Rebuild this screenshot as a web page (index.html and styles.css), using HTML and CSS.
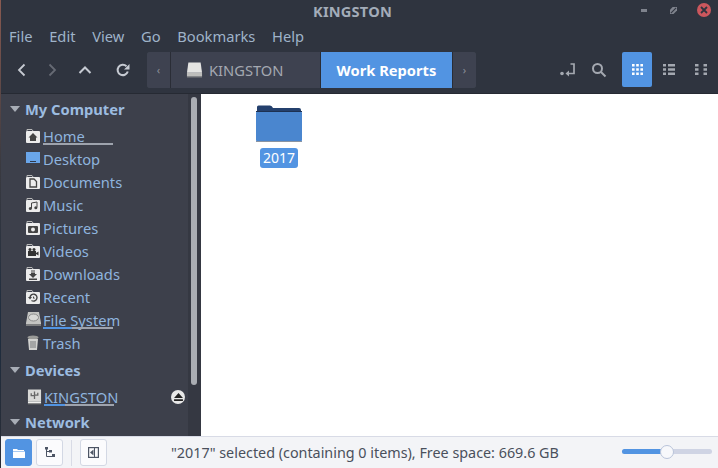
FILE: index.html
```html
<!DOCTYPE html>
<html lang="en">
<head>
<meta charset="utf-8">
<title>KINGSTON</title>
<link rel="stylesheet" href="styles.css">
</head>
<body>
<div class="window">
  <header class="titlebar">
    <span class="title">KINGSTON</span>
    <div class="wm">
      <span class="wm-min"></span>
      <svg class="wm-max" width="7" height="7" viewBox="0 0 8 8"><path d="M0 8V3L3 0L8 0V4L4 8Z" fill="#7f838d"/><path d="M1 7L7 1" stroke="#2f343f" stroke-width="1.2"/></svg>
      <span class="wm-close"><svg width="8" height="8" viewBox="0 0 8 8"><path d="M1 1L7 7M7 1L1 7" stroke="#2f343f" stroke-width="1.8"/></svg></span>
    </div>
  </header>
  <nav class="menubar">
    <span>File</span><span>Edit</span><span>View</span><span>Go</span><span>Bookmarks</span><span>Help</span>
  </nav>
  <div class="toolbar">
    <div class="navs">
      <svg class="ico" width="16" height="16" viewBox="0 0 16 16"><path d="M10.500 2.500L5 8l5.500 5.500" fill="none" stroke="#c6cad2" stroke-width="1.800"/></svg>
      <svg class="ico" width="16" height="16" viewBox="0 0 16 16"><path d="M5.500 2.500L11 8l-5.500 5.500" fill="none" stroke="#666a74" stroke-width="1.800"/></svg>
      <svg class="ico" width="16" height="16" viewBox="0 0 16 16"><path d="M2.500 11L8 5.500 13.500 11" fill="none" stroke="#c6cad2" stroke-width="2"/></svg>
      <svg class="ico" width="16" height="16" viewBox="0 0 16 16"><path d="M12.800 9.500A5.200 5.200 0 1 1 11.500 4.200" fill="none" stroke="#c6cad2" stroke-width="2"/><path d="M9 7.500h5.500V2z" fill="#c6cad2"/></svg>
    </div>
    <div class="path">
      <span class="arrow arrow-left">‹</span>
      <span class="crumb">
        <svg width="17" height="16" viewBox="0 0 18 16"><path d="M2.500 0h13l1.500 11H1z" fill="#e4e4e2"/><rect x="1" y="11" width="16" height="4" fill="#bdbdbb"/><rect x="1" y="15" width="16" height="1" fill="#77787c"/></svg>
        KINGSTON
      </span>
      <span class="crumb-active">Work Reports</span>
      <span class="arrow arrow-right">›</span>
    </div>
    <div class="tools">
      <svg class="tool-ico" width="16" height="16" viewBox="0 0 16 16"><circle cx="2" cy="11.500" r="1.800" fill="#a4a8b0"/><path d="M10.500 2h3.500v9.500H7" fill="none" stroke="#a4a8b0" stroke-width="1.700"/><path d="M9 8.500v6L5.500 11.500z" fill="#a4a8b0"/></svg>
      <svg class="tool-ico" width="16" height="16" viewBox="0 0 16 16"><circle cx="6.500" cy="6.500" r="4.500" fill="none" stroke="#a4a8b0" stroke-width="2"/><path d="M10 10l4.500 4.500" stroke="#a4a8b0" stroke-width="2"/></svg>
      <span class="view-on"><svg width="11" height="11" viewBox="0 0 11 11"><path d="M0 0h2.600v2.600H0zM4.200 0h2.600v2.600H4.200zM8.400 0h2.600v2.600H8.400zM0 4.200h2.600v2.600H0zM4.200 4.200h2.600v2.600H4.200zM8.400 4.200h2.600v2.600H8.400zM0 8.400h2.600v2.600H0zM4.200 8.400h2.600v2.600H4.200zM8.400 8.400h2.600v2.600H8.400z" fill="#fff"/></svg></span>
      <svg class="view-off" width="12" height="11" viewBox="0 0 12 11"><path d="M0 0h3v2.600H0zM5 0h7v2.600H5zM0 4.200h3v2.600H0zM5 4.200h7v2.600H5zM0 8.400h3v2.600H0zM5 8.400h7v2.600H5z" fill="#a4a8b0"/></svg>
      <svg class="view-off" width="12" height="11" viewBox="0 0 12 11"><path d="M0 0h3.500v2.600H0zM8.500 0H12v2.600H8.500zM0 4.200h3.500v2.600H0zM8.500 4.200H12v2.600H8.500zM0 8.400h3.500v2.600H0zM8.500 8.400H12v2.600H8.500z" fill="#a4a8b0"/></svg>
    </div>
  </div>
  <div class="main">
    <aside class="sidebar">
      <div class="places">
        <div class="head first"><span class="tri"></span>My Computer</div>
        <div class="row row-first"><svg class="pl" width="14" height="15" viewBox="0 0 14 15"><path d="M1 3V1.500h5L7 3" fill="none" stroke="#b8b8b8"/><rect y="3" width="14" height="12" rx="1" fill="#ececec"/><path d="M7 5L2.500 9.500H4V13h6V9.500h1.500z" fill="#444"/></svg><span class="lbl use">Home<i class="bar"></i></span></div>
        <div class="row"><svg class="pl" width="14" height="15" viewBox="0 0 14 15"><rect y="1" width="14" height="11" fill="#6aa6ea"/><rect x="4" y="10" width="6" height="1" fill="#2f3a4c"/></svg><span class="lbl">Desktop</span></div>
        <div class="row"><svg class="pl" width="14" height="15" viewBox="0 0 14 15"><path d="M1 3V1.500h5L7 3" fill="none" stroke="#b8b8b8"/><rect y="3" width="14" height="12" rx="1" fill="#ececec"/><path d="M4 5h4l2.500 2.500V13H4z" fill="none" stroke="#444" stroke-width="1.300"/></svg><span class="lbl">Documents</span></div>
        <div class="row"><svg class="pl" width="14" height="15" viewBox="0 0 14 15"><path d="M1 3V1.500h5L7 3" fill="none" stroke="#b8b8b8"/><rect y="3" width="14" height="12" rx="1" fill="#ececec"/><path d="M5.500 11.500V6L11 5v5.500" fill="none" stroke="#444"/><circle cx="4.300" cy="11.500" r="1.500" fill="#444"/><circle cx="9.800" cy="10.700" r="1.500" fill="#444"/></svg><span class="lbl">Music</span></div>
        <div class="row"><svg class="pl" width="14" height="15" viewBox="0 0 14 15"><path d="M1 3V1.500h5L7 3" fill="none" stroke="#b8b8b8"/><rect y="3" width="14" height="12" rx="1" fill="#ececec"/><rect x="2" y="6" width="10" height="7" rx="1" fill="#444"/><circle cx="7" cy="9.500" r="2" fill="#ececec"/></svg><span class="lbl">Pictures</span></div>
        <div class="row"><svg class="pl" width="14" height="15" viewBox="0 0 14 15"><path d="M1 3V1.500h5L7 3" fill="none" stroke="#b8b8b8"/><rect y="3" width="14" height="12" rx="1" fill="#ececec"/><rect x="2" y="8" width="8" height="5" fill="#333"/><circle cx="4" cy="6.500" r="1.500" fill="#333"/><circle cx="8" cy="6.500" r="1.500" fill="#333"/><path d="M10 10l2.500-1.500v4L10 11z" fill="#333"/></svg><span class="lbl">Videos</span></div>
        <div class="row"><svg class="pl" width="14" height="15" viewBox="0 0 14 15"><path d="M1 3V1.500h5L7 3" fill="none" stroke="#b8b8b8"/><rect y="3" width="14" height="12" rx="1" fill="#ececec"/><path d="M5 4.500h4v1H5zM5 6.500h4V8h2l-4 4-4-4h2zM3 12.500h8V14H3z" fill="#444"/></svg><span class="lbl">Downloads</span></div>
        <div class="row"><svg class="pl" width="14" height="15" viewBox="0 0 14 15"><path d="M1 3V1.500h5L7 3" fill="none" stroke="#b8b8b8"/><rect y="3" width="14" height="12" rx="1" fill="#ececec"/><path d="M4 8.500a3.500 3.500 0 1 1 1.500 3" fill="none" stroke="#444" stroke-width="1.400"/><path d="M2 8h4l-2 2.500zM7 7v2.500h2" fill="#444"/></svg><span class="lbl">Recent</span></div>
        <div class="row"><svg class="pl wide" width="15" height="15" viewBox="0 0 15 15"><path d="M2 0h11l2 11v3H0v-3z" fill="#c4c4c2"/><ellipse cx="7.500" cy="5.500" rx="5" ry="3.500" fill="#d8d8d6" stroke="#8b8b8b"/><rect y="12" width="15" height="2" fill="#7c7d7f"/></svg><span class="lbl use">File System<i class="bar bar-fs"></i></span></div>
        <div class="row"><svg class="pl" width="14" height="16" viewBox="0 0 14 16"><ellipse cx="7" cy="2.500" rx="5.500" ry="2" fill="#9a9a98"/><path d="M2 4h10l-1 11H3z" fill="#d2d2d0"/><path d="M5 6v7M7 6v7M9 6v7" stroke="#77787a"/></svg><span class="lbl">Trash</span></div>
        <div class="head devices"><span class="tri"></span>Devices</div>
        <div class="row row-dev"><svg class="pl wide" width="15" height="16" viewBox="0 0 16 16"><path d="M1 0h14v13H1z" fill="#d9d9d7"/><path d="M8 2v8M4.500 4v2.500H8M11.500 3.500V6H8" stroke="#666" stroke-width="1.400" fill="none"/><rect x="1" y="13" width="14" height="2" fill="#f0f0ee"/><rect x="1" y="15" width="14" height="1" fill="#666"/></svg><span class="lbl use">KINGSTON<i class="bar bar-dev"></i></span>
          <span class="eject"><svg width="9" height="8" viewBox="0 0 10 9"><path d="M5 0l5 5.500H0zM0 7h10v2H0z" fill="#222"/></svg></span></div>
        <div class="head network"><span class="tri"></span>Network</div>
      </div>
      <div class="scroll"><span class="thumb"></span></div>
    </aside>
    <section class="files">
      <div class="item">
        <svg width="48" height="38" viewBox="0 0 48 38"><path d="M2 4V3a1.500 1.500 0 0 1 1.500-1.500H15q2 0 3 2.500h26a2 2 0 0 1 2 2v3H2z" fill="#24406d"/><rect x="1" y="7" width="46" height="31" rx="2" fill="#4a86cf"/><rect x="1" y="7" width="46" height="1" fill="#1d3152"/><rect x="1" y="37" width="46" height="1" fill="#8a94a2"/></svg>
        <span class="item-name">2017</span>
      </div>
    </section>
  </div>
  <footer class="status">
    <div class="panes">
      <span class="pane on"><svg width="12" height="10" viewBox="0 0 12 10"><path d="M0 1h4l1 1h6v1H0zM0 3.500h12V10H0z" fill="#fff"/></svg></span>
      <span class="pane"><svg width="10" height="11" viewBox="0 0 10 11"><path d="M1.500 1v8.500H10M1.500 4.500H7" fill="none" stroke="#4d5565" stroke-width="1"/><path d="M0 0h3v2.500H0zM4 3h3v2.500H4zM7 7h3v2.500H7z" fill="#4d5565"/></svg></span>
      <span class="sep"></span>
      <span class="pane"><svg width="11" height="11" viewBox="0 0 11 11"><rect x=".6" y=".6" width="9.800" height="9.800" fill="none" stroke="#4d5565" stroke-width="1.200"/><path d="M5.500 2.500v6L2 5.500z" fill="#4d5565"/><rect x="6" y="1" width="1" height="9" fill="#4d5565"/></svg></span>
    </div>
    <span class="status-text">"2017" selected (containing 0 items), Free space: 669.6 GB</span>
    <div class="zoom"><span class="fill"></span><span class="knob"></span></div>
  </footer>
</div>
</body>
</html>
```

FILE: styles.css
```css
* { box-sizing: border-box; }
html, body { margin: 0; padding: 0; }
body { width: 718px; height: 468px; overflow: hidden; font-family: "Noto Sans", "Open Sans", sans-serif; font-size: 14.7px; background: #2f343f; }
.window { width: 718px; height: 468px; display: flex; flex-direction: column; background: #2f343f; border-left: 1px solid; border-image: linear-gradient(#8a5a50, #3a3a40 35%, #1d2c3e 70%, #2a2d36) 1; }
.titlebar { height: 24px; flex: none; position: relative; display: flex; align-items: center; justify-content: center; }
.title { font-weight: 700; font-size: 14.600px; color: #a3acb9; margin-right: 14px; margin-top: -2px; letter-spacing: .2px; }
.wm { position: absolute; right: 7px; top: 2px; display: flex; align-items: center; height: 16px; }
.wm-min { width: 6px; height: 3px; background: #7f838d; margin-right: 23px; }
.wm-max { margin-right: 20px; }
.wm-close { width: 14px; height: 14px; border-radius: 50%; background: #cc575d; display: flex; align-items: center; justify-content: center; }
.menubar { height: 24px; flex: none; display: flex; align-items: center; padding-left: 8px; color: #9fb3c9; gap: 16.700px; }
.toolbar { height: 46px; flex: none; display: flex; align-items: center; border-bottom: 1px solid #262a33; padding-bottom: 2px; }
.navs { width: 146px; display: flex; gap: 14px; padding-left: 13px; flex: none; }
.ico { flex: none; }
.navs .ico:nth-child(3) { margin-left: 3px; }
.navs .ico:nth-child(4) { margin-left: 7.500px; }
.path { display: flex; height: 36px; flex: none; color: #a4a8b0; border-radius: 3px; overflow: hidden; background: #3e4250; }
.arrow { width: 24px; display: flex; align-items: center; justify-content: center; color: #8b8f98; font-size: 11px; background: #3e4250; }
.arrow-left { border-right: 1px solid #2a2d36; }
.crumb { width: 150px; display: flex; align-items: center; gap: 6px; padding-left: 15px; border-right: 1px solid #2a2d36; color: #a4a8b0; }
.crumb-active { width: 131px; background: #5294e2; color: #fff; font-weight: 700; display: flex; align-items: center; justify-content: center; }
.arrow-right { border-left: 1px solid #2a2d36; }
.tools { display: flex; align-items: center; margin-left: 84px; }
.tool-ico { flex: none; margin-right: 15px; }
.view-on { width: 30px; height: 35px; background: #5294e2; border-radius: 2px; display: flex; align-items: center; justify-content: center; }
.view-off { margin-left: 11px; flex: none; }
.view-off:last-child { margin-left: 20px; }
.main { flex: 1; display: flex; min-height: 0; }
.sidebar { width: 200px; flex: none; background: #3d404b; display: flex; }
.places { width: 187px; flex: none; color: #8fb4de; position: relative; }
.head { font-weight: 700; height: 23px; display: flex; align-items: center; color: #9cbce0; padding-left: 9px; gap: 5px; }
.head.first { margin-top: 3px; }
.head.devices { margin-top: 4px; }
.head.network { margin-top: 2px; }
.tri { width: 0; height: 0; border-left: 5px solid transparent; border-right: 5px solid transparent; border-top: 6px solid #a8adb6; }
.row { height: 23px; display: flex; align-items: center; padding-left: 25px; gap: 3px; position: relative; }
.row-first { margin-top: 4px; }
.row-dev { margin-top: 4px; padding-left: 26px; }
.pl { flex: none; }
.pl.wide { margin-right: -1px; }
.lbl { position: relative; line-height: 18px; }
.bar { position: absolute; left: 0; top: 16px; width: 70px; height: 2px; background: #9ea3ad; }
.bar-fs { background: linear-gradient(90deg, #5294e2 0 41%, #9ea3ad 41%); }
.bar-dev { background: linear-gradient(90deg, #5294e2 0 30%, #9ea3ad 30%); }
.eject { position: absolute; left: 170px; top: 5px; width: 14px; height: 14px; border-radius: 50%; background: #e8e8e8; display: flex; align-items: center; justify-content: center; }
.scroll { width: 13px; flex: none; background: #353842; padding-left: 3px; padding-top: 3px; }
.thumb { display: block; width: 6px; height: 288px; background: #a9acb2; border-radius: 3px; }
.files { flex: 1; background: #fff; padding: 10px 0 0 51px; }
.item { width: 54px; display: flex; flex-direction: column; align-items: center; gap: 6px; }
.item-name { background: #5294e2; color: #fff; border-radius: 3px; padding: 0 3px; line-height: 20px; height: 20px; font-size: 14px; }
.status { height: 32px; flex: none; background: #f3f4f7; border-top: 1px solid #d8dbe6; display: flex; align-items: center; position: relative; color: #4a505c; }
.panes { display: flex; align-items: center; gap: 4px; padding-left: 4px; width: 155px; flex: none; }
.pane { width: 27px; height: 27px; border: 1px solid #d3d8e4; border-radius: 3px; background: #fbfbfd; display: flex; align-items: center; justify-content: center; }
.pane.on { background: #5294e2; border-color: #5294e2; }
.sep { width: 1px; height: 26px; background: #d8dbe6; margin: 0 4px; }
.status-text { font-size: 14.350px; white-space: nowrap; margin-left: 15px; }
.zoom { position: absolute; left: 621px; top: 12px; width: 90px; height: 5px; background: #cfd4e4; border-radius: 3px; }
.fill { display: block; width: 40px; height: 5px; background: #5294e2; border-radius: 3px; }
.knob { position: absolute; left: 38px; top: -4px; width: 14px; height: 14px; background: #f7f8fb; border: 1px solid #b9c4da; border-radius: 50%; }
```
